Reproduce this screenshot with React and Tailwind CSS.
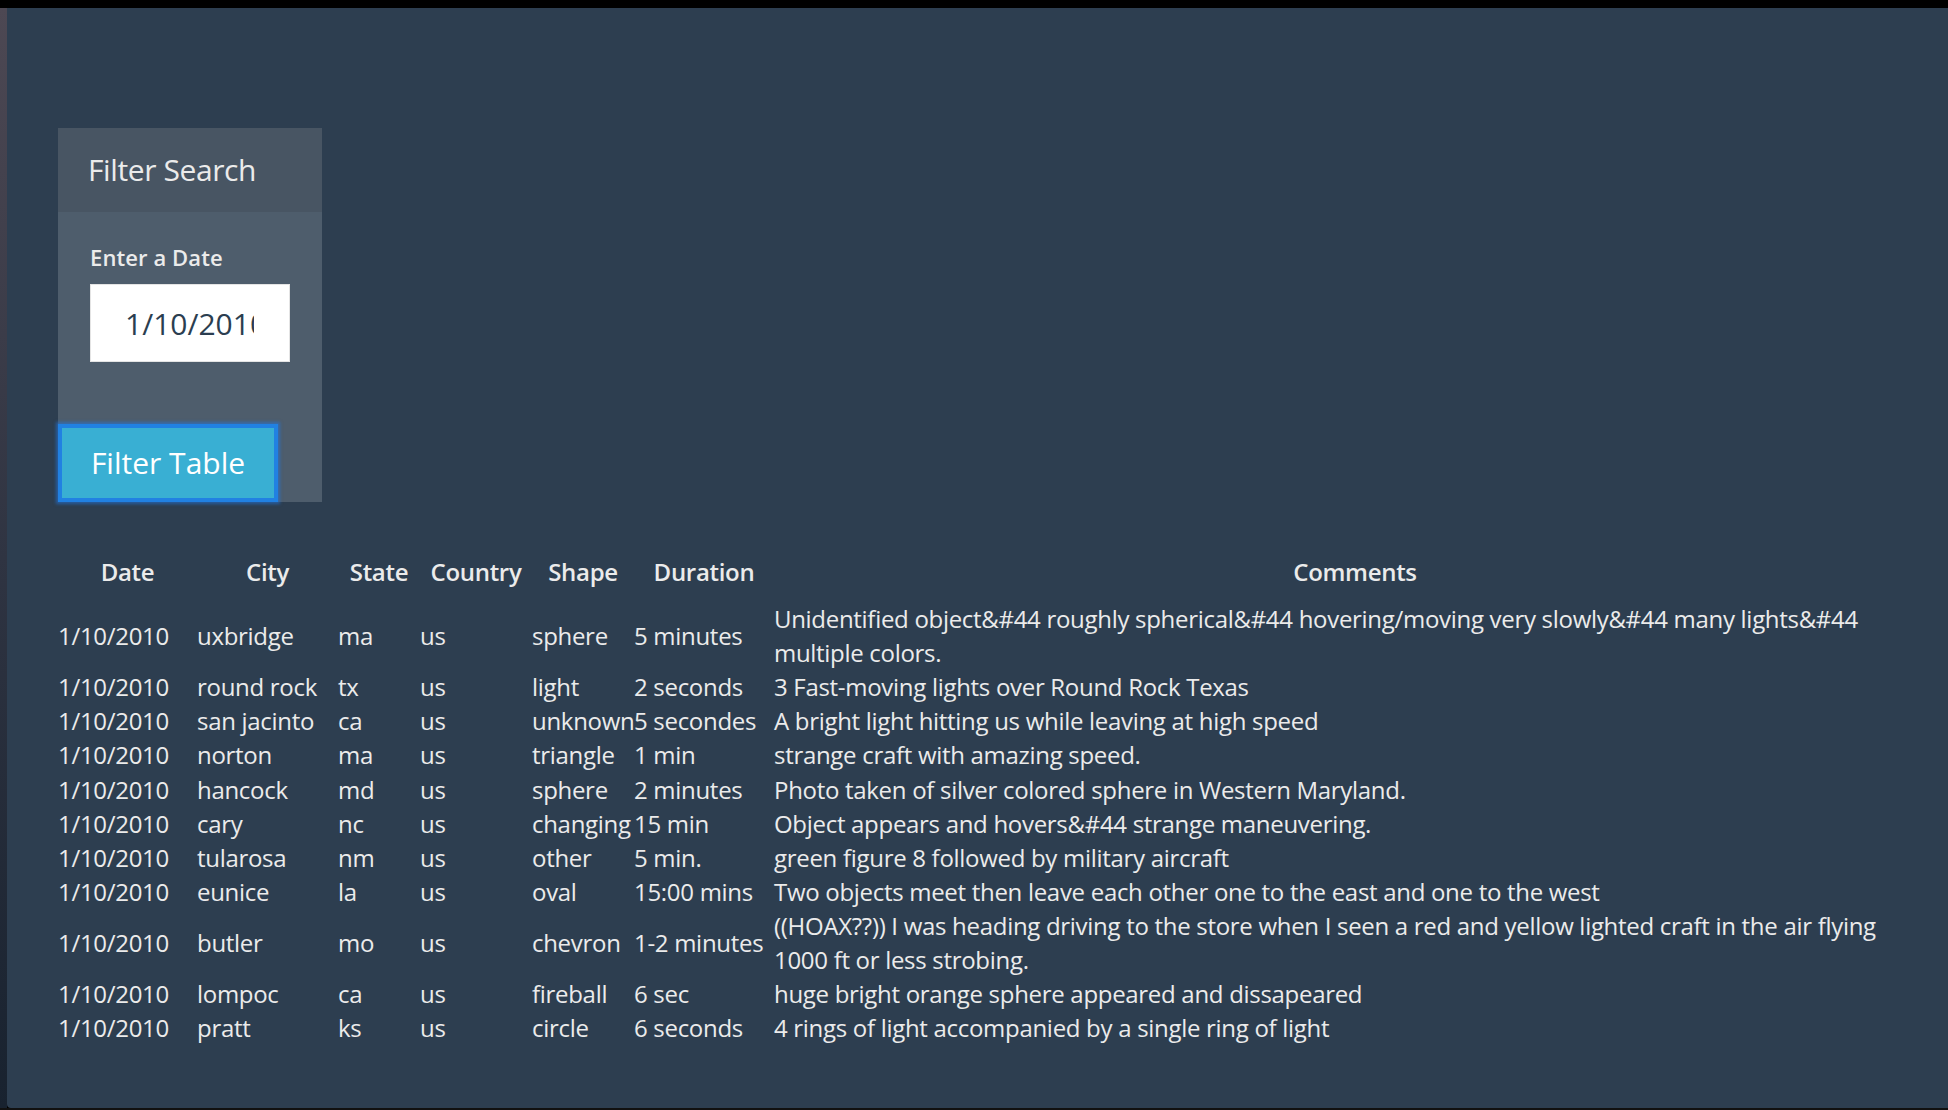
import React from "react";

const rows = [
  ["1/10/2010", "uxbridge", "ma", "us", "sphere", "5 minutes", "Unidentified object&#44 roughly spherical&#44 hovering/moving very slowly&#44 many lights&#44 multiple colors."],
  ["1/10/2010", "round rock", "tx", "us", "light", "2 seconds", "3 Fast-moving lights over Round Rock Texas"],
  ["1/10/2010", "san jacinto", "ca", "us", "unknown", "5 secondes", "A bright light hitting us while leaving at high speed"],
  ["1/10/2010", "norton", "ma", "us", "triangle", "1 min", "strange craft with amazing speed."],
  ["1/10/2010", "hancock", "md", "us", "sphere", "2 minutes", "Photo taken of silver colored sphere in Western Maryland."],
  ["1/10/2010", "cary", "nc", "us", "changing", "15 min", "Object appears and hovers&#44 strange maneuvering."],
  ["1/10/2010", "tularosa", "nm", "us", "other", "5 min.", "green figure 8 followed by military aircraft"],
  ["1/10/2010", "eunice", "la", "us", "oval", "15:00 mins", "Two objects meet then leave each other one to the east and one to the west"],
  ["1/10/2010", "butler", "mo", "us", "chevron", "1-2 minutes", "((HOAX??)) I was heading driving to the store when I seen a red and yellow lighted craft in the air flying 1000 ft or less strobing."],
  ["1/10/2010", "lompoc", "ca", "us", "fireball", "6 sec", "huge bright orange sphere appeared and dissapeared"],
  ["1/10/2010", "pratt", "ks", "us", "circle", "6 seconds", "4 rings of light accompanied by a single ring of light"],
];

const headers = ["Date", "City", "State", "Country", "Shape", "Duration", "Comments"];

export default function App() {
  return (
    <div
      className="w-[1948px] h-[1110px] flex flex-col bg-black overflow-hidden"
      style={{ fontFamily: '"Open Sans", "Liberation Sans", sans-serif' }}
    >
      <div className="h-[8px] bg-black shrink-0" />
      <div className="flex flex-1 min-h-0">
        <div className="w-[7px] shrink-0 bg-gradient-to-b from-[#4d4853] via-[#2f3442] to-[#18222f]" />
        <div className="flex-1 bg-[#2d3e50] rounded-bl-[4px] text-[#ebebeb] pl-[51px] pt-[120px]">
          {/* Panel */}
          <div className="w-[264px] bg-[#4e5d6c]">
            <div className="h-[84px] bg-[#485563] flex items-center pl-[30px]">
              <h3 className="text-[30px] leading-none text-[#ebebeb] tracking-[-0.4px]">Filter Search</h3>
            </div>
            <div className="pt-[28px] pl-[32px]">
              <label className="block text-[22px] leading-[34px] font-semibold text-[#ebebeb] tracking-[0.1px]">Enter a Date</label>
              <input
                readOnly
                value="1/10/2010"
                className="mt-[10px] block w-[200px] h-[78px] bg-white border border-[#e4e4e4] pl-[34px] pr-[35px] text-[30px] text-[#2b3e50] outline-none"
              />
            </div>
            <div className="mt-[62px]">
              <button className="w-[220px] h-[78px] bg-[#39afd3] border-[4px] border-[#2181e2] shadow-[0_0_3px_2px_rgba(33,120,230,0.55)] text-white text-[30px] leading-none">
                Filter Table
              </button>
            </div>
          </div>

          {/* Table */}
          <table className="mt-[53px] table-fixed border-collapse w-[1878px] text-[24px] leading-[34.1px] tracking-[-0.3px]">
            <colgroup>
              <col className="w-[139px]" />
              <col className="w-[141px]" />
              <col className="w-[82px]" />
              <col className="w-[112px]" />
              <col className="w-[102px]" />
              <col className="w-[140px]" />
              <col />
            </colgroup>
            <thead>
              <tr>
                {headers.map((h) => (
                  <th key={h} className="p-0 pb-[13px] text-center font-semibold text-[#ebebeb] align-top whitespace-nowrap">
                    {h}
                  </th>
                ))}
              </tr>
            </thead>
            <tbody>
              {rows.map((r, i) => (
                <tr key={i}>
                  {r.map((c, j) => (
                    <td
                      key={j}
                      className={
                        j === 6
                          ? "p-0 pr-[16px] align-middle text-left"
                          : "p-0 align-middle text-left whitespace-nowrap overflow-visible"
                      }
                    >
                      {c}
                    </td>
                  ))}
                </tr>
              ))}
            </tbody>
          </table>
        </div>
      </div>
      <div className="h-[2px] bg-[#111] shrink-0" />
    </div>
  );
}
